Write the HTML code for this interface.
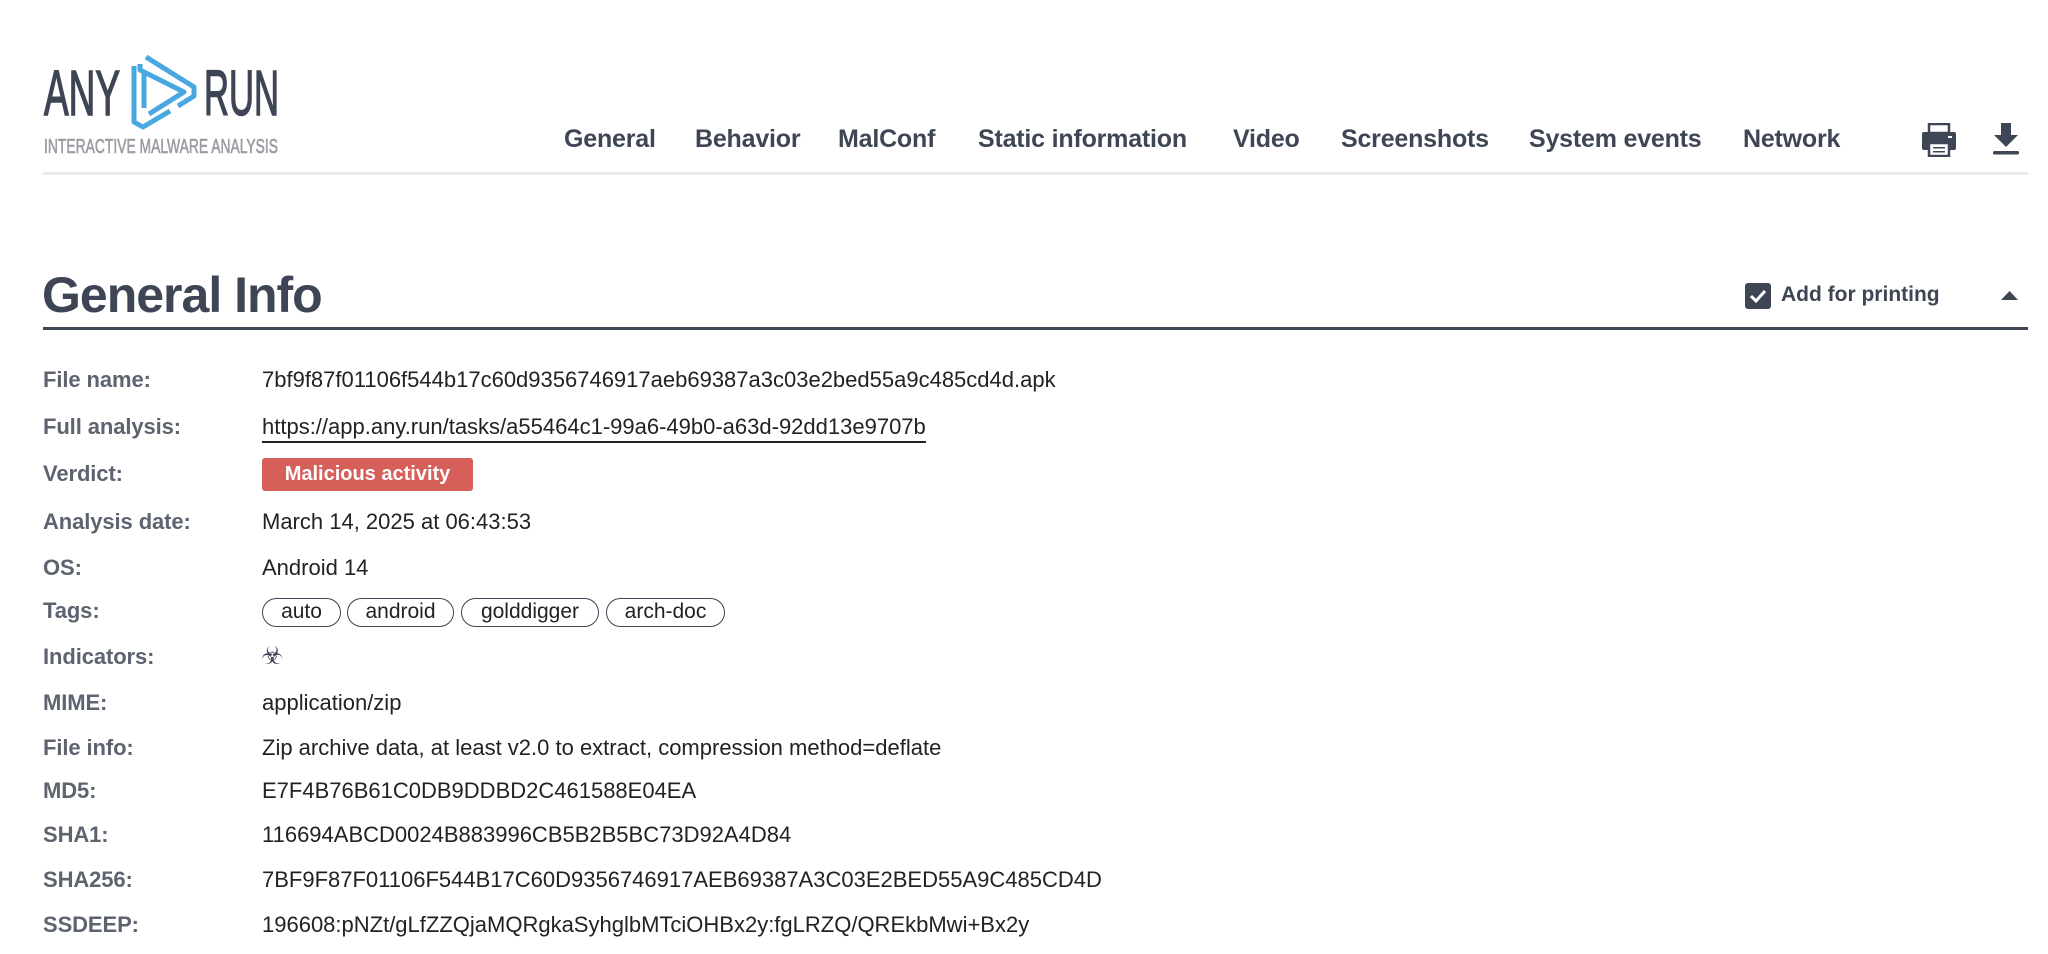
<!DOCTYPE html>
<html><head><meta charset="utf-8"><style>
*{margin:0;padding:0;box-sizing:border-box}
body{width:2048px;height:954px;background:#fff;position:relative;overflow:hidden;font-family:"Liberation Sans",Arial,sans-serif;color:#3e4554}
.a{position:absolute;white-space:nowrap}
.nav{top:125px;font-size:25px;font-weight:bold;color:#3e4554;letter-spacing:-0.2px}
.lab{left:43px;font-size:22px;font-weight:bold;color:#5d6470;letter-spacing:-0.1px}
.val{left:262px;font-size:22px;color:#222}
.tag{position:absolute;top:598px;height:29px;border:1.6px solid #3e4554;border-radius:15px;font-size:21px;color:#222;text-align:center;line-height:26px}
</style></head><body>
<svg class="a" style="left:0;top:0" width="300" height="170">
<g stroke="#3e4554" stroke-width="1.6" fill="#3e4554">
<text x="44" y="115" font-family="Liberation Sans Narrow,Liberation Sans,sans-serif" font-size="64" textLength="76" lengthAdjust="spacingAndGlyphs">ANY</text>
<text x="204" y="115" font-family="Liberation Sans Narrow,Liberation Sans,sans-serif" font-size="64" textLength="75" lengthAdjust="spacingAndGlyphs">RUN</text>
</g>
<text x="44" y="153" font-family="Liberation Sans Narrow,Liberation Sans,sans-serif" font-size="20" fill="#9a9ca3" stroke="#9a9ca3" stroke-width="0.6" textLength="234" lengthAdjust="spacingAndGlyphs">INTERACTIVE MALWARE ANALYSIS</text>
<g fill="none" stroke="#4aa8e0" stroke-width="5" stroke-linejoin="round">
<path d="M146,57 L194,87 L194,96 L178,106"/>
<path d="M134,66 L134,122 L143,127 L170,111"/>
<path d="M140,64 L140,70 L184,92 L149,114"/>
<path d="M144,72 L144,108"/>
</g>
</svg>
<div class="a nav" style="left:564px">General</div>
<div class="a nav" style="left:695px">Behavior</div>
<div class="a nav" style="left:838px">MalConf</div>
<div class="a nav" style="left:978px">Static information</div>
<div class="a nav" style="left:1233px">Video</div>
<div class="a nav" style="left:1341px">Screenshots</div>
<div class="a nav" style="left:1529px">System events</div>
<div class="a nav" style="left:1743px">Network</div>
<svg class="a" style="left:1922px;top:123px" width="34" height="34" viewBox="0 0 34 34">
<rect x="7" y="1" width="20" height="9" fill="#fff" stroke="#3e4554" stroke-width="2.5"/>
<rect x="0" y="9" width="34" height="18" rx="2" fill="#3e4554"/>
<rect x="26" y="13" width="4" height="2" fill="#fff"/>
<rect x="7" y="20" width="20" height="13" fill="#fff" stroke="#3e4554" stroke-width="2.5"/>
<rect x="11" y="24" width="12" height="1.5" fill="#3e4554"/><rect x="11" y="28" width="12" height="1.5" fill="#3e4554"/>
</svg>
<svg class="a" style="left:1993px;top:123px" width="26" height="32" viewBox="0 0 26 32">
<path d="M8,0 H18 V12 H25 L13,24 L1,12 H8 Z" fill="#3e4554"/>
<rect x="0" y="28" width="26" height="3.5" rx="1.5" fill="#3e4554"/>
</svg>
<div class="a" style="left:43px;top:172px;width:1985px;height:3px;background:#ebebeb"></div>
<div class="a" style="left:42px;top:266px;font-size:50px;font-weight:bold;color:#3e4554;letter-spacing:-1px">General Info</div>
<svg class="a" style="left:1745px;top:283px" width="26" height="26" viewBox="0 0 26 26">
<rect x="0" y="0" width="26" height="26" rx="3" fill="#3e4554"/>
<path d="M6,13 L11,18 L20,8" fill="none" stroke="#fff" stroke-width="3"/>
</svg>
<div class="a" style="left:1781px;top:283px;font-size:21px;font-weight:bold;color:#3e4554">Add for printing</div>
<svg class="a" style="left:2001px;top:291px" width="17" height="9"><path d="M0,9 L8.5,0 L17,9Z" fill="#3e4554"/></svg>
<div class="a" style="left:43px;top:327px;width:1985px;height:3px;background:#3e4554"></div>

<div class="a lab" style="top:367px">File name:</div><div class="a val" style="top:367px">7bf9f87f01106f544b17c60d9356746917aeb69387a3c03e2bed55a9c485cd4d.apk</div>
<div class="a lab" style="top:414px">Full analysis:</div><div class="a val" style="top:414px;border-bottom:2px solid #222;padding-bottom:1px">https://app.any.run/tasks/a55464c1-99a6-49b0-a63d-92dd13e9707b</div>
<div class="a lab" style="top:461px">Verdict:</div>
<div class="a" style="left:262px;top:458px;width:211px;height:33px;background:#d65f5a;border-radius:3px;color:#fff;font-size:20px;font-weight:bold;text-align:center;line-height:33px">Malicious activity</div>
<div class="a lab" style="top:509px">Analysis date:</div><div class="a val" style="top:509px">March 14, 2025 at 06:43:53</div>
<div class="a lab" style="top:555px">OS:</div><div class="a val" style="top:555px">Android 14</div>
<div class="a lab" style="top:598px">Tags:</div>
<div class="tag" style="left:262px;width:79px">auto</div>
<div class="tag" style="left:347px;width:107px">android</div>
<div class="tag" style="left:461px;width:138px">golddigger</div>
<div class="tag" style="left:606px;width:119px">arch-doc</div>
<div class="a lab" style="top:644px">Indicators:</div><div class="a" style="left:261px;top:641px;font-size:25px;color:#3e4554;font-family:'DejaVu Sans',sans-serif">☣</div>
<div class="a lab" style="top:690px">MIME:</div><div class="a val" style="top:690px">application/zip</div>
<div class="a lab" style="top:735px">File info:</div><div class="a val" style="top:735px">Zip archive data, at least v2.0 to extract, compression method=deflate</div>
<div class="a lab" style="top:778px">MD5:</div><div class="a val" style="top:778px">E7F4B76B61C0DB9DDBD2C461588E04EA</div>
<div class="a lab" style="top:822px">SHA1:</div><div class="a val" style="top:822px">116694ABCD0024B883996CB5B2B5BC73D92A4D84</div>
<div class="a lab" style="top:867px">SHA256:</div><div class="a val" style="top:867px">7BF9F87F01106F544B17C60D9356746917AEB69387A3C03E2BED55A9C485CD4D</div>
<div class="a lab" style="top:912px">SSDEEP:</div><div class="a val" style="top:912px">196608:pNZt/gLfZZQjaMQRgkaSyhglbMTciOHBx2y:fgLRZQ/QREkbMwi+Bx2y</div>
</body></html>
